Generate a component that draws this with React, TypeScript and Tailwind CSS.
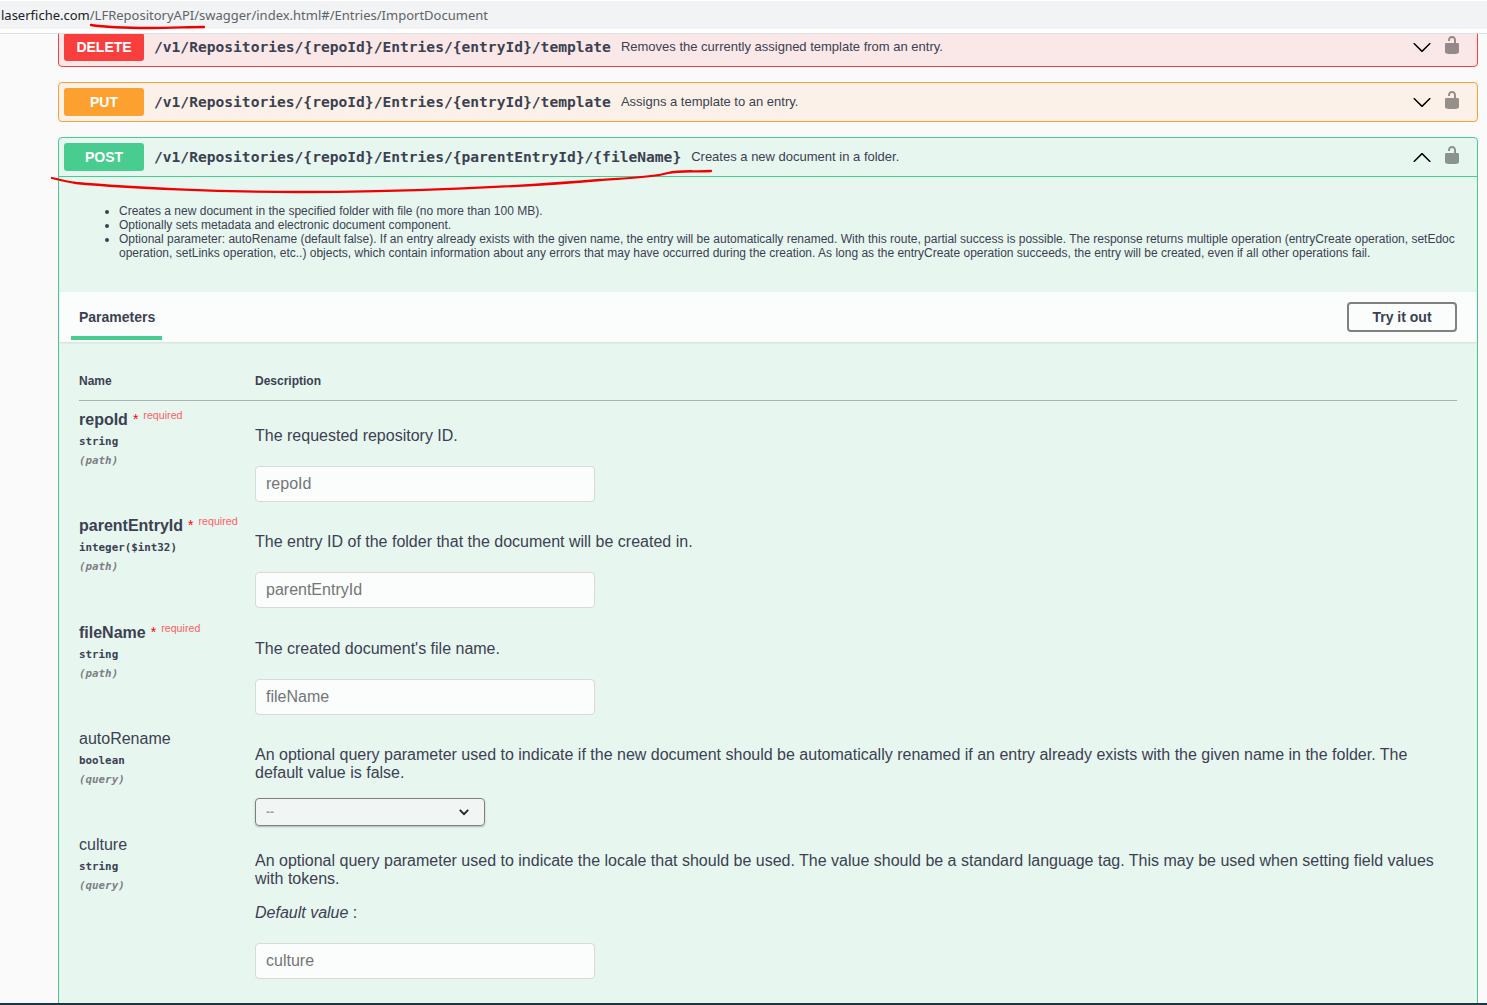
import React from "react";

const sans = "font-['Liberation_Sans',Arial,sans-serif]";
const mono = "font-['DejaVu_Sans_Mono',monospace]";

const Chevron = ({ up }: { up?: boolean }) => (
  <svg viewBox="0 0 20 20" className={`w-5 h-5 ${up ? "rotate-180 mt-[2px]" : ""}`} fill="#000">
    <path d="M17.418 6.109c.272-.268.709-.268.979 0s.271.701 0 .969l-7.908 7.83c-.27.268-.707.268-.979 0l-7.908-7.83c-.27-.268-.27-.701 0-.969.271-.268.709-.268.979 0L10 13.25l7.418-7.141z" />
  </svg>
);

const Lock = () => (
  <svg viewBox="0 0 20 20" className="w-5 h-5 opacity-40" fill="#000">
    <path d="M15.8 8H14V5.6C14 2.703 12.665 1 10 1 7.334 1 6 2.703 6 5.6V6h2v-.801C8 3.754 8.797 3 10 3c1.203 0 2 .754 2 2.199V8H4c-.553 0-1 .646-1 1.199V17c0 .549.428 1.139.951 1.307l1.197.387C5.672 18.861 6.55 19 7.1 19h5.8c.549 0 1.428-.139 1.951-.307l1.196-.387c.524-.167.953-.757.953-1.306V9.199C17 8.646 16.352 8 15.8 8z" />
  </svg>
);

function Summary({ method, badge, path, desc, up, border }: { method: string; badge: string; path: string; desc: string; up?: boolean; border?: string }) {
  return (
    <div className={`flex items-center h-[38px] pl-[5px] pr-[15px] ${border ?? ""}`}>
      <div className={`w-20 h-7 rounded-[3px] flex items-center justify-center text-white text-sm font-bold shrink-0 ${badge}`}>{method}</div>
      <div className={`${mono} ml-2.5 text-[14.6px] font-bold text-[#3b4151] whitespace-nowrap`}>{path}</div>
      <div className="ml-2.5 text-[13px] text-[#3b4151] flex-1 whitespace-nowrap">{desc}</div>
      <div className="flex items-center gap-[10px]">
        <Chevron up={up} />
        <div className="-mt-1"><Lock /></div>
      </div>
    </div>
  );
}

function ParamName({ name, type, loc, required }: { name: string; type: string; loc: string; required?: boolean }) {
  return (
    <div className="w-[176px] shrink-0 mt-px">
      <div className="flex items-start h-5 text-[#3b4151] whitespace-nowrap">
        <span className={`text-base leading-5 ${required ? "font-bold" : ""}`}>{name}</span>
        {required && <span className="text-[#ff0000] text-sm leading-5 ml-[5px] -mt-px">*</span>}
        {required && <span className="text-[#ff6060] text-[10.7px] leading-3 ml-[5px] -mt-px">required</span>}
      </div>
      <div className={`${mono} text-[10.85px] font-bold leading-4 text-[#3b4151] mt-1`}>{type}</div>
      <div className={`${mono} text-[10.85px] font-bold italic leading-4 text-[#7d7f85] mt-[3px]`}>({loc})</div>
    </div>
  );
}

const Input = ({ ph }: { ph: string }) => (
  <input
    readOnly
    placeholder={ph}
    className="block w-[340px] h-9 bg-white/80 border border-[#d9d9d9] rounded-[4px] px-[10px] text-base text-[#3b4151] placeholder:text-[#757575] outline-none"
  />
);

export default function App() {
  return (
    <div className={`${sans} relative h-[1005px] overflow-hidden bg-[#fafafa] flex flex-col`}>
      <div className="h-[34px] shrink-0 bg-white border-b border-[#dfe1e5] pt-px">
        <div className="h-7 bg-[#f1f3f4] pl-px pt-[2px] flex items-center font-['Noto_Sans',sans-serif] text-[13px] text-[#5f6368] whitespace-nowrap">
          <span className="text-[#202124]">laserfiche.com</span>/LFRepositoryAPI/swagger/index.html#/Entries/ImportDocument
        </div>
      </div>

      <div className="flex-1 overflow-hidden pl-[58px] pr-[9px]">
        <div className="-mt-[7px] border border-[#f93e3e] rounded bg-[#fae7e7]">
          <Summary method="DELETE" badge="bg-[#f93e3e]" path="/v1/Repositories/{repoId}/Entries/{entryId}/template" desc="Removes the currently assigned template from an entry." />
        </div>
        <div className="mt-[15px] border border-[#fca130] rounded bg-[#fbf1e8]">
          <Summary method="PUT" badge="bg-[#fca130]" path="/v1/Repositories/{repoId}/Entries/{entryId}/template" desc="Assigns a template to an entry." />
        </div>
        <div className="mt-[15px] border border-[#49cc90] rounded-t bg-[#e8f6f0]">
          <Summary up method="POST" badge="bg-[#49cc90]" border="border-b border-[#49cc90] h-[39px]" path="/v1/Repositories/{repoId}/Entries/{parentEntryId}/{fileName}" desc="Creates a new document in a folder." />

          <ul className="list-disc pl-[60px] pr-[20px] pt-[27px] pb-[32px] text-xs leading-[14px] text-[#3b4151]">
            <li>Creates a new document in the specified folder with file (no more than 100 MB).</li>
            <li>Optionally sets metadata and electronic document component.</li>
            <li>Optional parameter: autoRename (default false). If an entry already exists with the given name, the entry will be automatically renamed. With this route, partial success is possible. The response returns multiple operation (entryCreate operation, setEdoc operation, setLinks operation, etc..) objects, which contain information about any errors that may have occurred during the creation. As long as the entryCreate operation succeeds, the entry will be created, even if all other operations fail.</li>
          </ul>

          <div className="h-[50px] bg-white/80 shadow-[0_1px_2px_rgba(0,0,0,0.1)] flex items-start justify-between pl-3 pr-5">
            <div className="h-12 w-[91px] border-b-4 border-[#49cc90] text-sm font-bold text-[#3b4151] pl-2 pt-[17px] leading-4">Parameters</div>
            <button className="mt-[10px] w-[110px] h-[30px] border-2 border-[#808080] rounded text-sm font-bold text-[#3b4151] bg-transparent">Try it out</button>
          </div>

          <div className="pl-5 pr-5 pt-[31px] pb-10">
            <div className="flex text-xs font-bold text-[#3b4151] leading-4 h-[28px] border-b border-[#a8b3af]">
              <div className="w-[176px]">Name</div>
              <div>Description</div>
            </div>

            <div className="flex pt-[7.9px]">
              <ParamName required name="repoId" type="string" loc="path" />
              <div className="pt-[18px] pb-[13.3px] text-base leading-[18px] text-[#3b4151]">
                <p>The requested repository ID.</p>
                <div className="mt-[21.1px]"><Input ph="repoId" /></div>
              </div>
            </div>
            <div className="flex">
              <ParamName required name="parentEntryId" type="integer($int32)" loc="path" />
              <div className="pt-[18px] pb-[13.3px] text-base leading-[18px] text-[#3b4151]">
                <p>The entry ID of the folder that the document will be created in.</p>
                <div className="mt-[21.1px]"><Input ph="parentEntryId" /></div>
              </div>
            </div>
            <div className="flex">
              <ParamName required name="fileName" type="string" loc="path" />
              <div className="pt-[18px] pb-[13.3px] text-base leading-[18px] text-[#3b4151]">
                <p>The created document's file name.</p>
                <div className="mt-[21.1px]"><Input ph="fileName" /></div>
              </div>
            </div>
            <div className="flex">
              <ParamName name="autoRename" type="boolean" loc="query" />
              <div className="flex-1 pt-[18px] pb-2 text-base leading-[18px] text-[#3b4151]">
                <p>An optional query parameter used to indicate if the new document should be automatically renamed if an entry already exists with the given name in the folder. The default value is false.</p>
                <div className="mt-4 w-[230px] h-7 border border-[#808080] rounded-[4px] bg-[#f7f7f7]/60 shadow-[0_1px_2px_rgba(0,0,0,0.25)] flex items-center justify-between pl-[10px] pr-[13px]">
                  <span className="text-xs font-bold text-[#a0a0a0]">--</span>
                  <svg viewBox="0 0 20 20" className="w-[14px] h-[14px]" fill="none" stroke="#222" strokeWidth="2.6"><path d="M4 7l6 6 6-6" /></svg>
                </div>
              </div>
            </div>
            <div className="flex">
              <ParamName name="culture" type="string" loc="query" />
              <div className="flex-1 pt-[18px] text-base leading-[18px] text-[#3b4151]">
                <p>An optional query parameter used to indicate the locale that should be used. The value should be a standard language tag. This may be used when setting field values with tokens.</p>
                <p className="mt-4 italic">Default value <span className="not-italic">:</span></p>
                <div className="mt-[21.4px]"><Input ph="culture" /></div>
              </div>
            </div>
          </div>
        </div>
      </div>

      <div className="h-[2px] shrink-0 bg-[#1c3540]" />

      <svg className="absolute left-0 top-0 pointer-events-none" width="1487" height="200" fill="none" stroke="#f00000" strokeWidth="2.3" strokeLinecap="round">
        <path d="M91 25 C110 28 130 28 150 28 C170 28 190 27 204 27" />
        <path d="M52 178 C60 180 68 182 76 183 C130 188 220 192 300 192 C400 192 520 187 600 180 C630 178 655 177 668 173 C680 170 695 172 711 171" />
      </svg>
    </div>
  );
}
